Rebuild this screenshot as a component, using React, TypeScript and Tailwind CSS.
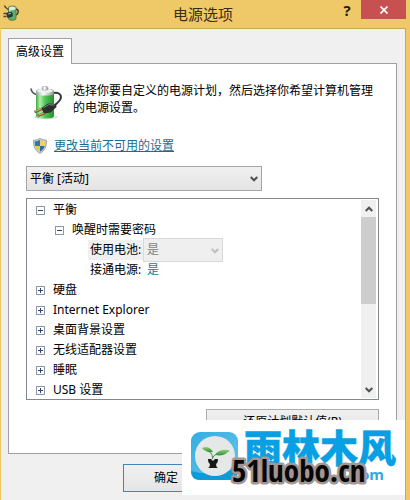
import React, { useState } from 'react';

const plans = ['平衡 [活动]'];

const groups = ['硬盘', 'Internet Explorer', '桌面背景设置', '无线适配器设置', '睡眠', 'USB 设置'];

const Chevron = ({ className = '' }: { className?: string }) => (
  <svg viewBox="0 0 8 6" className={`w-2 h-1.5 ${className}`} fill="none" stroke="currentColor" strokeWidth="2">
    <path d="M0.7 1 4 4.3 7.3 1" />
  </svg>
);

const TitleIcon = () => (
  <svg viewBox="0 0 16 16" className="w-4 h-4">
    <path d="M1.5 0.5C2 3 4 3 5.500 5" fill="none" stroke="#5d4a22" strokeWidth="1.400" />
    <path d="M12.500 4c3.500 0 3.500 4.500 0.500 6" fill="none" stroke="#33413a" strokeWidth="1.500" />
    <path d="M5.500 2.500q0-1.500 3.800-1.500T13 2.500v11q0 1.800-3.800 1.800T5.500 13.500z" fill="#5fae70" stroke="#2e6a3e" strokeWidth="0.700" />
    <path d="M6 2.500q3.200-2 6.500 0v2q-3.200 1.500-6.500 0z" fill="#dcebdc" />
    <path d="M7 4.500v3" stroke="#d5f0d5" strokeWidth="1.400" />
    <path d="M0.500 8.500h3M0.500 11.500h3" stroke="#4d4535" strokeWidth="1.300" />
    <path d="M3 8 7.500 6.500q4 2 1.500 5.500L4.500 13z" fill="#27383a" />
    <path d="M5 9 8 8.300" stroke="#9db1ad" strokeWidth="1" />
  </svg>
);

const BatteryIcon = () => (
  <svg viewBox="0 0 32 34" className="w-8 h-[34px]">
    <defs>
      <linearGradient id="cell" x1="0" x2="1">
        <stop offset="0" stopColor="#3aa945" />
        <stop offset="0.22" stopColor="#b5edaa" />
        <stop offset="0.5" stopColor="#4fc655" />
        <stop offset="1" stopColor="#24902f" />
      </linearGradient>
      <linearGradient id="cap" x1="0" x2="1">
        <stop offset="0" stopColor="#9aa59e" />
        <stop offset="0.4" stopColor="#ffffff" />
        <stop offset="1" stopColor="#88938c" />
      </linearGradient>
    </defs>
    <ellipse cx="16" cy="31" rx="12" ry="2.500" fill="#dfe5df" />
    <path d="M1 2.500C1.500 6.500 3.500 8 7 8.500" fill="none" stroke="#4f5b66" strokeWidth="1.800" />
    <path d="M6 5v25q0 2.500 9 2.500t9-2.500V5z" fill="url(#cell)" />
    <path d="M6 5q0-2.500 9-2.500T24 5v2.500q0 2-9 2T6 7.500z" fill="url(#cap)" />
    <ellipse cx="15" cy="4.800" rx="8" ry="2" fill="#eef3ef" />
    <path d="M12 1.500Q12 0.300 15 0.300t3 1.200v2.300q-3 1.300-6 0z" fill="url(#cap)" stroke="#a2aaa5" strokeWidth="0.500" />
    <path d="M24 7c5-1 8 2 6.500 6-1.200 3.200-4 4-6.500 7" fill="none" stroke="#303737" strokeWidth="2" />
    <path d="M4.500 26l8-3.200M8 29.800l7-2.800" stroke="#7b6130" strokeWidth="2.600" />
    <path d="M5 25.300l7.500-3M8.500 29.100l6.500-2.600" stroke="#dcbf75" strokeWidth="1" />
    <path d="M11.500 22 18 17.500l8 0.500 0.500 3-6 5.500-6.500 1z" fill="#2b302f" />
    <path d="M13.500 21.800 18.500 18.700l6 0.300" fill="none" stroke="#7e8785" strokeWidth="1" />
  </svg>
);

const ShieldIcon = () => (
  <svg viewBox="0 0 14 16" className="w-3.5 h-4">
    <defs>
      <clipPath id="shield">
        <path d="M7 2Q9.500 3.300 12.200 3.500 12.500 10.500 7 13.800 1.500 10.500 1.800 3.500 4.500 3.300 7 2z" />
      </clipPath>
    </defs>
    <path d="M7 0.400Q9.800 2 13.600 2.200 14 11.700 7 15.600 0 11.700 0.400 2.200 4.200 2 7 0.400z" fill="#c3cdd2" stroke="#78858d" strokeWidth="0.600" />
    <g clipPath="url(#shield)">
      <path d="M0 0h7v8H0z" fill="#2f78ad" />
      <path d="M7 0h7v8H7z" fill="#f0d35a" />
      <path d="M0 8h7v8H0z" fill="#ecc94c" />
      <path d="M7 8h7v8H7z" fill="#2a6da3" />
    </g>
  </svg>
);

const Toggle = ({ open, label, onClick }: { open: boolean; label: string; onClick?: () => void }) => (
  <button
    type="button"
    aria-label={label}
    aria-expanded={open}
    onClick={onClick}
    className="w-[9px] h-[9px] shrink-0 border border-[#8b97a6] bg-white text-[#2f4573]"
  >
    <svg viewBox="0 0 7 7" className="block w-[7px] h-[7px]" stroke="currentColor" strokeWidth="1">
      <path d={open ? 'M1 3.5h5' : 'M1 3.5h5M3.5 1v5'} />
    </svg>
  </button>
);

const Watermark = () => (
  <div className="w-[223px] h-[75px] bg-white">
    <svg viewBox="0 0 223 75" className="block w-full h-full">
      <defs>
        <linearGradient id="tile" x1="0" y1="0" x2="1" y2="1">
          <stop offset="0" stopColor="#35aee2" />
          <stop offset="1" stopColor="#66c4ea" />
        </linearGradient>
        <linearGradient id="leaf" x1="0" y1="0" x2="0" y2="1">
          <stop offset="0" stopColor="#8fd070" />
          <stop offset="1" stopColor="#2d8f3a" />
        </linearGradient>
      </defs>
      <rect x="9" y="12" width="47" height="48" rx="9" fill="url(#tile)" />
      <path d="M9 51q20 6 47-3v3q0 9-9 9H18q-9 0-9-9z" fill="#0b9bd8" />
      <circle cx="33" cy="36" r="20" fill="#e6e8e8" />
      <path d="M30.500 39C31 34 28 31 21 28.500M30.500 39C31 34 37 33 47 31" fill="none" stroke="#3c9442" strokeWidth="1" />
      <path d="M20 28q7-3 11 4-7 1-11-4z" fill="url(#leaf)" />
      <path d="M33 35q3-6 14-5-3 7-14 5z" fill="url(#leaf)" />
      <path d="M26 39h3l2 2 2-2h3q0 4-2 5 0 3 2 4H26q2-1 2-4-2-1-2-5z" fill="#15191a" />
      <text x="62" y="42" className="font-['Noto_Sans_CJK_SC',sans-serif] text-[38px] font-black" fill="#08a0e3" stroke="#08a0e3" strokeWidth="0.500">雨林木风</text>
      <text x="202" y="60" textAnchor="end" className="font-['Noto_Sans','Liberation_Sans',sans-serif] text-[15px] font-bold" fill="#35a9dd">.com</text>
      <text
        x="50"
        y="62"
        className="font-['Open_Sans_Condensed','Roboto_Condensed','Noto_Sans_Condensed','Noto_Sans_CJK_SC',sans-serif] text-[31px] font-medium"
        fill="#080808"
        stroke="#a39694"
        strokeWidth="5"
        strokeLinejoin="round"
        paintOrder="stroke"
      >
        51luobo.cn
      </text>
    </svg>
  </div>
);

export default function App() {
  const [expanded, setExpanded] = useState<string[]>([]);

  const toggle = (name: string) =>
    setExpanded((prev) => (prev.includes(name) ? prev.filter((n) => n !== name) : [...prev, name]));

  return (
    <div className="relative min-h-screen flex flex-col bg-[#efc868] font-['Noto_Sans','Noto_Sans_CJK_SC',sans-serif] text-xs text-black">
      {/* Title bar */}
      <header className="relative h-7 flex items-start justify-between pl-[3px] pr-1">
        <div className="pt-[5px]">
          <TitleIcon />
        </div>
        <h1 className="absolute inset-x-0 top-0 pr-1 text-center text-[15px] leading-7 text-[#3d2e12] pointer-events-none">电源选项</h1>
        <div className="flex">
          <button type="button" aria-label="帮助" className="w-7 h-5 text-[15px] leading-5 font-bold text-[#2a1d08]">?</button>
          <button type="button" aria-label="关闭" className="w-[45px] h-[19px] flex items-center justify-center bg-[#c75050] text-white">
            <svg viewBox="0 0 8 8" className="w-2 h-2" stroke="currentColor" strokeWidth="1.700">
              <path d="M0.500 0.500l7 7M7.500 0.500l-7 7" />
            </svg>
          </button>
        </div>
      </header>

      <main className="grow flex flex-col ml-px mr-1 px-[7px] pt-[9px] border-t border-r border-[#cfa552] bg-[#f0f0f0]">
        <div role="tablist" className="flex">
          <button type="button" role="tab" aria-selected="true" className="relative z-10 -mb-px h-[26px] w-16 border border-b-0 border-[#a0a0a0] bg-white">
            高级设置
          </button>
        </div>

        <section className="mr-px px-[17px] pt-[18px] pb-[19px] border border-[#a0a0a0] bg-white">
          <div className="flex gap-[11px] pl-1">
            <div className="pt-1">
              <BatteryIcon />
            </div>
            <p className="leading-[17px]">选择你要自定义的电源计划，然后选择你希望计算机管理的电源设置。</p>
          </div>

          <div className="mt-4 flex items-center gap-[7px] pl-[7px] h-5">
            <ShieldIcon />
            <a href="#settings" className="text-[#1a6d92] underline">更改当前不可用的设置</a>
          </div>

          <div className="relative mt-[10px] w-[236px]">
            <select aria-label="电源计划" className="block appearance-none w-full h-[25px] pl-[3px] border border-[#a5a5a5] bg-linear-to-b from-[#f0f0f0] to-[#e4e4e4]">
              {plans.map((plan) => (
                <option key={plan}>{plan}</option>
              ))}
            </select>
            <Chevron className="absolute right-1 top-[10px] text-[#505050] pointer-events-none" />
          </div>

          <div className="mt-[7px] h-[202px] flex justify-between border border-[#828790] pr-0.5 py-px">
            <ul className="grow leading-5 overflow-hidden">
              <li>
                <div className="flex items-center gap-2 pl-[9px]">
                  <Toggle open label="平衡" />
                  平衡
                </div>
                <div className="flex items-center gap-2 pl-7">
                  <Toggle open label="唤醒时需要密码" />
                  唤醒时需要密码
                </div>
                <div className="h-5 flex items-center pl-[61px]">
                  <label htmlFor="battery" className="w-[55px] pl-0.5 bg-[#f0f0f0]">使用电池:</label>
                  <div className="relative w-20">
                    <select id="battery" disabled className="block appearance-none w-full h-6 pl-[3px] border border-[#d9d9d9] bg-[#efefef] text-[#838383] opacity-100">
                      <option>是</option>
                    </select>
                    <Chevron className="absolute right-1 top-[10px] text-[#bfbfbf] pointer-events-none" />
                  </div>
                </div>
                <div className="flex pl-[63px]">
                  <span className="w-[57px]">接通电源:</span>
                  <a href="#plugged" className="text-[#1a7a9e]">是</a>
                </div>
              </li>
              {groups.map((name) => (
                <li key={name} className="flex items-center gap-2 pl-[9px]">
                  <Toggle open={expanded.includes(name)} label={name} onClick={() => toggle(name)} />
                  {name}
                </li>
              ))}
            </ul>

            {/* Scrollbar */}
            <div className="w-[15px] flex flex-col bg-[#f0f0f0]">
              <button type="button" aria-label="向上滚动" className="h-[17px] flex items-center justify-center text-[#505050]">
                <Chevron className="rotate-180" />
              </button>
              <div className="h-[87px] bg-[#cdcdcd]" />
              <button type="button" aria-label="向下滚动" className="mt-auto h-[17px] flex items-center justify-center text-[#505050]">
                <Chevron />
              </button>
            </div>
          </div>

          <div className="mt-[9px] flex justify-end">
            <button type="button" className="w-[173px] h-[25px] border border-[#acacac] bg-linear-to-b from-[#f0f0f0] to-[#e5e5e5]">还原计划默认值(R)</button>
          </div>
        </section>

        <footer className="mt-[10px] pb-2 pl-[115px]">
          <button type="button" className="w-[86px] h-7 border border-[#3f86bd] bg-linear-to-b from-[#f0f0f0] to-[#e5e5e5]">确定</button>
        </footer>
      </main>

      <div className="absolute right-[5px] bottom-[5px]">
        <Watermark />
      </div>
    </div>
  );
}
